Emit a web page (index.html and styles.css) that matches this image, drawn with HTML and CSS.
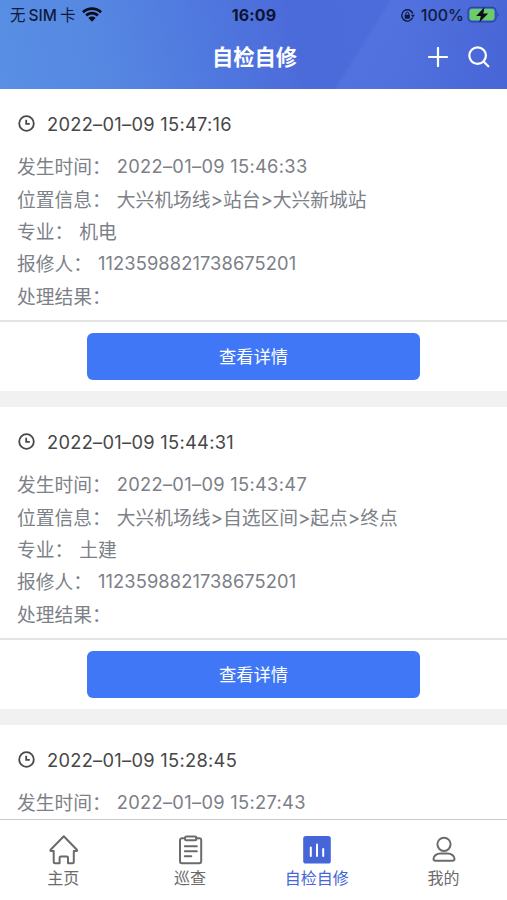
FILE: index.html
```html
<!DOCTYPE html>
<html lang="zh-CN">

<head>
    <meta charset="UTF-8">
    <meta name="viewport" content="width=device-width, initial-scale=1.0">
    <title>自检自修</title>
    <link rel="stylesheet" href="styles.css">
</head>

<body>
    <header class="header">
        <div class="status-bar">
            <div class="status-left">
                <span class="carrier">无<span class="sim">SIM</span>卡</span>
                <svg class="wifi" width="20" height="15" viewBox="0 0 20 15">
                    <path d="M0 4.3C5.7-1.1 14.3-1.1 20 4.3L18.1 6.3C13.5 1.9 6.5 1.9 1.9 6.3Z" />
                    <path d="M3.2 7.6C7.2 3.9 12.8 3.9 16.8 7.6L14.9 9.6C12 6.9 8 6.9 5.1 9.6Z" />
                    <path d="M6.4 11C8.5 9.1 11.5 9.1 13.6 11L10 14.7Z" />
                </svg>
            </div>
            <span class="clock">16:09</span>
            <div class="status-right">
                <svg class="lock" width="15" height="15" viewBox="0 0 15 15">
                    <path d="M12.7 9.6A5.7 5.7 0 1 1 12.8 5.5" fill="none" stroke="#101a3c" stroke-width="1.4" />
                    <path d="M10.9 6.8h4l-2 2.7z" />
                    <rect x="4.7" y="6.8" width="5.2" height="3.9" rx=".6" />
                    <path d="M5.8 7V5.7a1.5 1.5 0 0 1 3 0V7" fill="none" stroke="#101a3c" />
                </svg>
                <span class="percent">100%</span>
                <svg class="battery" width="33" height="18" viewBox="0 0 33 18">
                    <rect x="1" y="1.4" width="28" height="14.4" rx="4" fill="none" stroke="#29479a" stroke-width="1.3" />
                    <rect x="2.6" y="3" width="24.8" height="11.2" rx="2.4" fill="#6ccc68" />
                    <path d="M30.5 6.8c1.6.6 1.6 3.4 0 4z" fill="#29479a" />
                    <path d="M17.5 1L9.2 10h4.6l-1.5 6.6L21.2 7.6h-4.9z" fill="#0c1017" />
                </svg>
            </div>
        </div>
        <div class="nav-bar">
            <h1 class="title">自检自修</h1>
            <div class="actions">
                <svg width="20" height="20" viewBox="0 0 20 20">
                    <path d="M10 1v18M1 10h18" />
                </svg>
                <svg width="22" height="22" viewBox="0 0 22 22">
                    <circle cx="9.6" cy="9.6" r="8.3" />
                    <path d="M15.5 15.5l4.8 4.8" />
                </svg>
            </div>
        </div>
    </header>

    <main class="list">
        <section class="card">
            <div class="card-head">
                <svg class="time-icon" width="17" height="17" viewBox="0 0 17 17">
                    <circle cx="8.5" cy="8.5" r="7.3" />
                    <path d="M8.2 4.8v4h3.6" />
                </svg>
                <span>2022–01–09 15:47:16</span>
            </div>
            <div class="card-body">
                <p><span class="label">发生时间：</span><span class="num">2022–01–09 15:46:33</span></p>
                <p><span class="label">位置信息：</span><span>大兴机场线&gt;站台&gt;大兴新城站</span></p>
                <p><span class="label">专业：</span><span>机电</span></p>
                <p><span class="label">报修人：</span><span class="num code">1123598821738675201</span></p>
                <p><span class="label">处理结果：</span></p>
            </div>
            <div class="card-foot">
                <button class="detail-btn">查看详情</button>
            </div>
        </section>

        <section class="card">
            <div class="card-head">
                <svg class="time-icon" width="17" height="17" viewBox="0 0 17 17">
                    <circle cx="8.5" cy="8.5" r="7.3" />
                    <path d="M8.2 4.8v4h3.6" />
                </svg>
                <span>2022–01–09 15:44:31</span>
            </div>
            <div class="card-body">
                <p><span class="label">发生时间：</span><span class="num">2022–01–09 15:43:47</span></p>
                <p><span class="label">位置信息：</span><span>大兴机场线&gt;自选区间&gt;起点&gt;终点</span></p>
                <p><span class="label">专业：</span><span>土建</span></p>
                <p><span class="label">报修人：</span><span class="num code">1123598821738675201</span></p>
                <p><span class="label">处理结果：</span></p>
            </div>
            <div class="card-foot">
                <button class="detail-btn">查看详情</button>
            </div>
        </section>

        <section class="card">
            <div class="card-head">
                <svg class="time-icon" width="17" height="17" viewBox="0 0 17 17">
                    <circle cx="8.5" cy="8.5" r="7.3" />
                    <path d="M8.2 4.8v4h3.6" />
                </svg>
                <span>2022–01–09 15:28:45</span>
            </div>
            <div class="card-body">
                <p><span class="label">发生时间：</span><span class="num">2022–01–09 15:27:43</span></p>
            </div>
        </section>
    </main>

    <nav class="tab-bar">
        <a class="tab">
            <svg width="30" height="30" viewBox="0 0 30 30">
                <path d="M15.8 1.2L2.6 14.8c-.5.6-.2 1.2.5 1.2h2.6v11c0 .8.5 1.2 1.2 1.2h4.7v-5.5c0-.8.5-1.300 1.300-1.300h5.800c.8 0 1.300.5 1.300 1.300v5.500h4.600c.7 0 1.200-.4 1.200-1.200V16h2.600c.7 0 1-.6.5-1.200z" />
            </svg>
            <span>主页</span>
        </a>
        <a class="tab">
            <svg width="30" height="30" viewBox="0 0 30 30">
                <path d="M10 3.2H7a2 2 0 0 0-2 2v21a2 2 0 0 0 2 2h17.200a2 2 0 0 0 2-2v-21a2 2 0 0 0-2-2h-3" />
                <rect x="10" y="1.4" width="11.4" height="3.8" rx="1.5" />
                <path d="M9.800 11.200h12M9.800 16.200h12M9.800 21.200h6.500" />
            </svg>
            <span>巡查</span>
        </a>
        <a class="tab active">
            <svg width="30" height="30" viewBox="0 0 30 30">
                <rect class="fill" x="1.2" y="1" width="27.6" height="27.6" rx="2.6" />
                <path class="bars" d="M8.800 12.400v8.600M15 9.500v11.500M21.200 14v7" />
            </svg>
            <span>自检自修</span>
        </a>
        <a class="tab">
            <svg width="30" height="30" viewBox="0 0 30 30">
                <circle cx="15" cy="9.300" r="6.600" />
                <path d="M11.500 18.600h7c4 0 7 2.300 7 5.200 0 1.300-.7 2-2 2h-17c-1.300 0-2-.7-2-2 0-2.900 3-5.200 7-5.200z" />
            </svg>
            <span>我的</span>
        </a>
    </nav>
</body>

</html>
```
FILE: styles.css
```css
* {
    box-sizing: border-box;
}

body {
    margin: 0;
    height: 900px;
    display: flex;
    flex-direction: column;
    overflow: hidden;
    background-color: #fff;
    font-family: Inter, "Noto Sans CJK SC", sans-serif;
}

/* header */
.header {
    flex: none;
    height: 88.5px;
    background: linear-gradient(122deg, transparent 69%, rgba(100, 135, 235, 0.25) 70%, transparent 95%),
        linear-gradient(77deg, #598fe5 0%, #5688e2 20%, #5079df 40%, #4c6bda 58%, #4c6cdb 78%, #4865d5 100%);
}

.status-bar {
    height: 30px;
    display: grid;
    grid-template-columns: 1fr auto 1fr;
    align-items: center;
    padding: 0 7px 0 10px;
    color: #101a3c;
    font-size: 16px;
}

.status-left,
.status-right {
    display: flex;
    align-items: center;
}

.status-left {
    gap: 7px;
}

.status-right {
    justify-content: flex-end;
}

.carrier {
    margin-top: -2px;
    font-size: 15.5px;
    font-weight: 400;
}

.sim {
    margin: 0 3px;
    font-weight: 500;
}

.wifi {
    fill: #080d1c;
    margin-top: -2px;
}

.clock {
    color: #0b1432;
    font-size: 16px;
    font-weight: 700;
    letter-spacing: 0.1px;
    margin-right: 2px;
}

.lock {
    fill: #101a3c;
    margin-right: 6px;
}

.percent {
    font-weight: 500;
    margin-right: 3px;
}

.nav-bar {
    height: 54px;
    display: grid;
    grid-template-columns: 1fr auto 1fr;
    align-items: center;
    padding: 0 17px;
}

.title {
    grid-column: 2;
    margin: -3px 0 0 2px;
    color: #fff;
    font-size: 21.3px;
    font-weight: 700;
}

.actions {
    display: flex;
    align-items: center;
    justify-content: flex-end;
    gap: 20px;
}

.actions svg {
    fill: none;
    stroke: #fff;
    stroke-width: 2.2;
    stroke-linecap: round;
}

/* record list */
.list {
    flex: 1;
    min-height: 0;
    overflow: hidden;
}

.card {
    height: 318px;
    border-bottom: 16px solid #f1f1f1;
}

.card-head {
    height: 61px;
    display: flex;
    align-items: center;
    gap: 12px;
    padding: 9px 18px 0;
    color: #474747;
    font-size: 18.3px;
    letter-spacing: 0.28px;
}

.time-icon {
    fill: none;
    stroke: #484848;
    stroke-width: 1.8;
}

.card-body {
    height: 172px;
    border-bottom: 2px solid #e4e4e4;
    color: #7c8087;
    font-size: 18.75px;
}

.card-body p {
    margin: 0;
    height: 32.35px;
    padding-left: 17px;
    display: flex;
    align-items: center;
    white-space: nowrap;
}

.label {
    margin-right: 6px;
}

.num {
    font-size: 18.3px;
    letter-spacing: 0.3px;
}

.code {
    letter-spacing: 0.1px;
}

.card-foot {
    display: flex;
    justify-content: center;
    padding-top: 11px;
}

.detail-btn {
    width: 333px;
    height: 47px;
    border: none;
    border-radius: 6px;
    background-color: #4077f6;
    color: #fff;
    font-family: inherit;
    font-size: 17.3px;
    padding: 0 0 2px;
}

/* bottom tabs */
.tab-bar {
    flex: none;
    height: 81px;
    display: flex;
    border-top: 1px solid #c9c9c9;
    background-color: #fff;
}

.tab {
    flex: 1;
    display: flex;
    flex-direction: column;
    align-items: center;
    padding-top: 15px;
    color: #6b6b6b;
    font-size: 16px;
    line-height: 26px;
}

.tab svg {
    fill: none;
    stroke: #6b6b6b;
    stroke-width: 2;
    stroke-linejoin: round;
    stroke-linecap: round;
}

.tab.active {
    color: #4565d8;
}

.tab .fill {
    fill: #4565d8;
    stroke: none;
}

.tab .bars {
    stroke: #fff;
}
```
